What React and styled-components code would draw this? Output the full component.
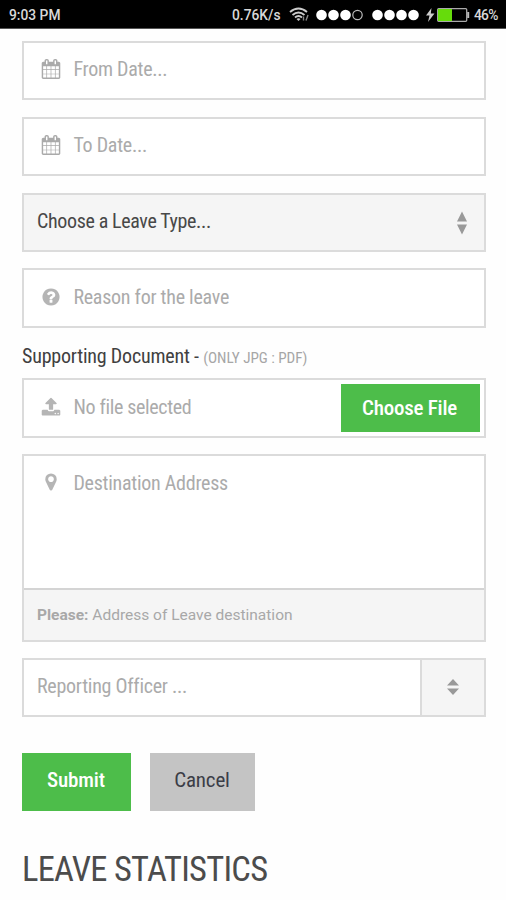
import React from "react";
import styled, { createGlobalStyle } from "styled-components";

const GlobalStyle = createGlobalStyle`
  * { box-sizing: border-box; }
  body { margin: 0; background: #fefefe; overflow: hidden; }
  button { border: 0; margin: 0; }
`;

const Screen = styled.div`
  width: 506px;
  height: 900px;
  overflow: hidden;
  background: #fefefe;
  font-family: "Roboto Condensed", Roboto, sans-serif;
  font-stretch: 75%;
`;

const StatusBar = styled.header`
  height: 29px;
  background: #000;
  border-bottom: 1px solid #555;
  display: flex;
  align-items: center;
  justify-content: space-between;
  padding: 1px 8px 0 9px;
  color: #d8d8d8;
  font: 500 13.8px/28px Roboto, sans-serif;
`;

const StatusGroup = styled.div`
  display: flex;
  align-items: center;
`;

const StatusText = styled.span`
  display: block;
  width: ${(p) => p.$w}px;
  margin-left: ${(p) => p.$gap || 0}px;
  white-space: nowrap;
  letter-spacing: ${(p) => p.$ls || 0}px;
`;

const StatusIcon = styled.svg`
  display: block;
  flex: none;
  margin-left: ${(p) => p.$gap}px;
`;

const Form = styled.form`
  margin: 12px 20.5px 0 22px;
  display: flex;
  flex-direction: column;
`;

const Field = styled.div`
  height: 59.4px;
  margin-bottom: ${(p) => p.$mb ?? 16.4}px;
  border: 2px solid #dbdbdb;
  background: ${(p) => (p.$shaded ? "#f5f5f5" : "#fff")};
  display: flex;
  align-items: center;
  padding: 0 ${(p) => p.$pr ?? 15}px ${(p) => p.$pb ?? 3.4}px ${(p) => (p.$icon ? 17 : 13)}px;
`;

const FieldIcon = styled.svg`
  width: 20px;
  height: 20px;
  flex: none;
  margin: 0 12.4px 0 0;
  fill: ${(p) => p.$color || "#b5b5b5"};
`;

const Text = styled.span`
  display: block;
  flex: 1;
  white-space: nowrap;
  font-size: 20px;
  line-height: 24px;
  letter-spacing: ${(p) => p.$ls ?? -0.26}px;
  color: ${(p) => (p.$dark ? "#484848" : "#ababab")};
`;

const Label = styled.label`
  height: 34.2px;
  font-size: 20px;
  line-height: 25px;
  letter-spacing: -0.2px;
  color: #404040;
  white-space: nowrap;
`;

const Hint = styled.small`
  font-size: 15.2px;
  letter-spacing: -0.04px;
  color: #a6a6a6;
`;

const FileButton = styled.button`
  width: 139px;
  height: 48px;
  margin-top: 2px;
  padding: 0 2px 1px 0;
  background: #4dbd4a;
  color: #fff;
  font: inherit;
  font-weight: 500;
  font-size: 21px;
  letter-spacing: -0.25px;
`;

const AddressBox = styled.div`
  height: 187.6px;
  margin-bottom: 16.4px;
  border: 2px solid #dbdbdb;
  background: #fff;
  display: flex;
  flex-direction: column;
`;

const AddressInput = styled.div`
  flex: 1;
  display: flex;
  align-items: flex-start;
  padding: 15px 17px 0;
`;

const AddressIcon = styled.div`
  display: flex;
  padding-top: 1px;
`;

const AddressNote = styled.div`
  height: 52px;
  border-top: 2px solid #d4d4d4;
  background: #f5f5f5;
  padding: 0 13px;
  color: #a8a8a8;
  font: 400 15.5px/50px Roboto, sans-serif;
  font-stretch: 100%;
  white-space: nowrap;
`;

const Officer = styled(Field)`
  padding-right: 0;
  padding-bottom: 0;
`;

const OfficerText = styled(Text)`
  margin-bottom: 3px;
`;

const Stepper = styled.div`
  width: 64px;
  height: 100%;
  border-left: 2px solid #dbdbdb;
  background: #f5f5f5;
  display: flex;
  align-items: center;
  justify-content: center;
`;

const Arrows = styled.svg`
  display: block;
  flex: none;
  margin-top: ${(p) => p.$mt || 0}px;
`;

const Actions = styled.div`
  display: flex;
  gap: 19px;
`;

const ActionButton = styled.button`
  width: ${(p) => p.$w}px;
  height: 58px;
  padding: 0 1px 3px 0;
  background: ${(p) => (p.$primary ? "#4dbd4a" : "#c4c4c4")};
  color: ${(p) => (p.$primary ? "#fff" : "#3b3d47")};
  font: inherit;
  font-weight: ${(p) => (p.$primary ? 500 : 400)};
  font-size: 21px;
  letter-spacing: -0.15px;
`;

const Heading = styled.h1`
  margin: 38px 0 0 22px;
  font-size: 34.5px;
  line-height: 40px;
  letter-spacing: -0.74px;
  font-weight: 400;
  color: #4c4c4c;
  white-space: nowrap;
`;

const PATHS = {
  calendar:
    "M192 1664h288v-288h-288v288zm352 0h320v-288h-320v288zm-352-352h288v-320h-288v320zm352 0h320v-320h-320v320zm-352-384h288v-288h-288v288zm736 736h320v-288h-320v288zm-384-736h320v-288h-320v288zm768 736h288v-288h-288v288zm-384-352h320v-320h-320v320zm-352-864v-288q0-13-9.5-22.5t-22.5-9.5h-64q-13 0-22.5 9.5t-9.5 22.5v288q0 13 9.5 22.5t22.5 9.5h64q13 0 22.5-9.5t9.5-22.5zm736 864h288v-320h-288v320zm-384-384h320v-288h-320v288zm384 0h288v-288h-288v288zm32-480v-288q0-13-9.5-22.5t-22.5-9.5h-64q-13 0-22.5 9.5t-9.5 22.5v288q0 13 9.5 22.5t22.5 9.5h64q13 0 22.5-9.5t9.5-22.5zm384-64v1280q0 52-38 90t-90 38h-1408q-52 0-90-38t-38-90v-1280q0-52 38-90t90-38h128v-96q0-66 47-113t113-47h64q66 0 113 47t47 113v96h384v-96q0-66 47-113t113-47h64q66 0 113 47t47 113v96h128q52 0 90 38t38 90z",
  question:
    "M1024 1376v-192q0-14-9-23t-23-9h-192q-14 0-23 9t-9 23v192q0 14 9 23t23 9h192q14 0 23-9t9-23zm256-672q0-88-55.5-163t-138.5-116-170-41q-243 0-371 213-15 24 8 42l132 100q7 6 19 6 16 0 25-12 53-68 86-92 34-24 86-24 48 0 85.5 26t37.5 59q0 38-20 61t-68 45q-63 28-115.5 86.5t-52.5 125.5v36q0 14 9 23t23 9h192q14 0 23-9t9-23q0-19 21.5-49.5t54.5-49.5q32-18 49-28.5t46-35 44.5-48 28-60.5 12.5-81zm384 192q0 209-103 385.5t-279.5 279.5-385.5 103-385.5-103-279.5-279.5-103-385.5 103-385.5 279.5-279.5 385.5-103 385.5 103 279.5 279.5 103 385.5z",
  upload:
    "M1344 1472q0-26-19-45t-45-19-45 19-19 45 19 45 45 19 45-19 19-45zm256 0q0-26-19-45t-45-19-45 19-19 45 19 45 45 19 45-19 19-45zm128-224v320q0 40-28 68t-68 28h-1472q-40 0-68-28t-28-68v-320q0-40 28-68t68-28h427q21 56 70.5 92t110.5 36h256q61 0 110.5-36t70.5-92h427q40 0 68 28t28 68zm-325-648q-17 40-59 40h-256v448q0 26-19 45t-45 19h-256q-26 0-45-19t-19-45v-448h-256q-42 0-59-40-17-39 14-69l448-448q18-19 45-19t45 19l448 448q31 30 14 69z",
  marker:
    "M1152 640q0-106-75-181t-181-75-181 75-75 181 75 181 181 75 181-75 75-181zm256 0q0 109-33 179l-364 774q-16 33-47.5 52t-67.5 19-67.5-19-46.5-52l-365-774q-33-70-33-179 0-212 150-362t362-150 362 150 150 362z",
};

const Icon = ({ name, color }) => (
  <FieldIcon viewBox="0 0 1792 1792" $color={color}>
    <path d={PATHS[name]} />
  </FieldIcon>
);

const Dots = ({ filled, gap }) => (
  <StatusIcon width="47" height="12" $gap={gap}>
    {[0, 1, 2, 3].map((i) => (
      <circle
        key={i}
        cx={5.5 + i * 12}
        cy="6"
        r={i < filled ? 5.3 : 4.7}
        fill={i < filled ? "#fff" : "none"}
        stroke={i < filled ? "none" : "#bbb"}
        strokeWidth="1.2"
      />
    ))}
  </StatusIcon>
);

export default function App() {
  return (
    <Screen>
      <GlobalStyle />
      <StatusBar>
        <StatusText $w={60}>9:03 PM</StatusText>
        <StatusGroup>
          <StatusText $w={50}>0.76K/s</StatusText>
          <StatusIcon width="20" height="15" viewBox="0 0 20 15" fill="none" $gap={7}>
            <path d="M1 5Q9.500 -2 18 5M3.500 8Q9.500 3 15.500 8M6 10.500Q9.500 7.500 13 10.500" stroke="#ccc" strokeWidth="1.9" />
            <path d="M7.500 12L9.500 14L11.500 12Q9.500 10.500 7.500 12Z" fill="#ccc" />
            <path d="M14.500 13.500V9.500M17 13.500L19 8" stroke="#888" strokeWidth="1.4" />
          </StatusIcon>
          <Dots filled={3} gap={7} />
          <Dots filled={4} gap={9} />
          <StatusIcon width="9" height="14" viewBox="0 0 9 14" $gap={7}>
            <path d="M5.500 0L0 7.500H3.500L2 14L8.500 5.500H4.800Z" fill="#ccc" />
          </StatusIcon>
          <StatusIcon width="33" height="14" viewBox="0 0 33 14" $gap={2}>
            <rect x="0.700" y="0.700" width="29" height="12.600" rx="1" fill="#000" stroke="#aaa" strokeWidth="1.300" />
            <rect x="1" y="1" width="14" height="12" fill="#66dc0b" />
            <path d="M31.200 4V10" stroke="#bbb" strokeWidth="2" />
          </StatusIcon>
          <StatusText $gap={4} $w={24} $ls={-0.75}>46%</StatusText>
        </StatusGroup>
      </StatusBar>

      <Form>
        <Field $icon>
          <Icon name="calendar" color="#aaa" />
          <Text>From Date...</Text>
        </Field>
        <Field $icon>
          <Icon name="calendar" color="#aaa" />
          <Text>To Date...</Text>
        </Field>
        <Field $shaded $pr={16}>
          <Text $dark $ls={-0.36}>Choose a Leave Type...</Text>
          <Arrows width="12" height="24" viewBox="0 0 12 24" $mt={5}>
            <path d="M6 0.500L11 10.500H1ZM1 13.500H11L6 23.500Z" fill="#999" />
          </Arrows>
        </Field>
        <Field $icon $pb={2}>
          <Icon name="question" />
          <Text>Reason for the leave</Text>
        </Field>
        <Label>
          Supporting Document - <Hint>(ONLY JPG : PDF)</Hint>
        </Label>
        <Field $icon $pr={3.5} $pb={2}>
          <Icon name="upload" />
          <Text $ls={-0.34}>No file selected</Text>
          <FileButton type="button">Choose File</FileButton>
        </Field>
        <AddressBox>
          <AddressInput>
            <AddressIcon>
              <Icon name="marker" />
            </AddressIcon>
            <Text>Destination Address</Text>
          </AddressInput>
          <AddressNote>
            <b>Please:</b> Address of Leave destination
          </AddressNote>
        </AddressBox>
        <Officer $mb={35.5}>
          <OfficerText>Reporting Officer ...</OfficerText>
          <Stepper>
            <Arrows width="14" height="18" viewBox="0 0 14 18" $mt={-2}>
              <path d="M7 1L13 7.500H1ZM1 10.500H13L7 17Z" fill="#999" />
            </Arrows>
          </Stepper>
        </Officer>
        <Actions>
          <ActionButton type="button" $primary $w={109}>Submit</ActionButton>
          <ActionButton type="button" $w={105}>Cancel</ActionButton>
        </Actions>
      </Form>
      <Heading>LEAVE STATISTICS</Heading>
    </Screen>
  );
}
